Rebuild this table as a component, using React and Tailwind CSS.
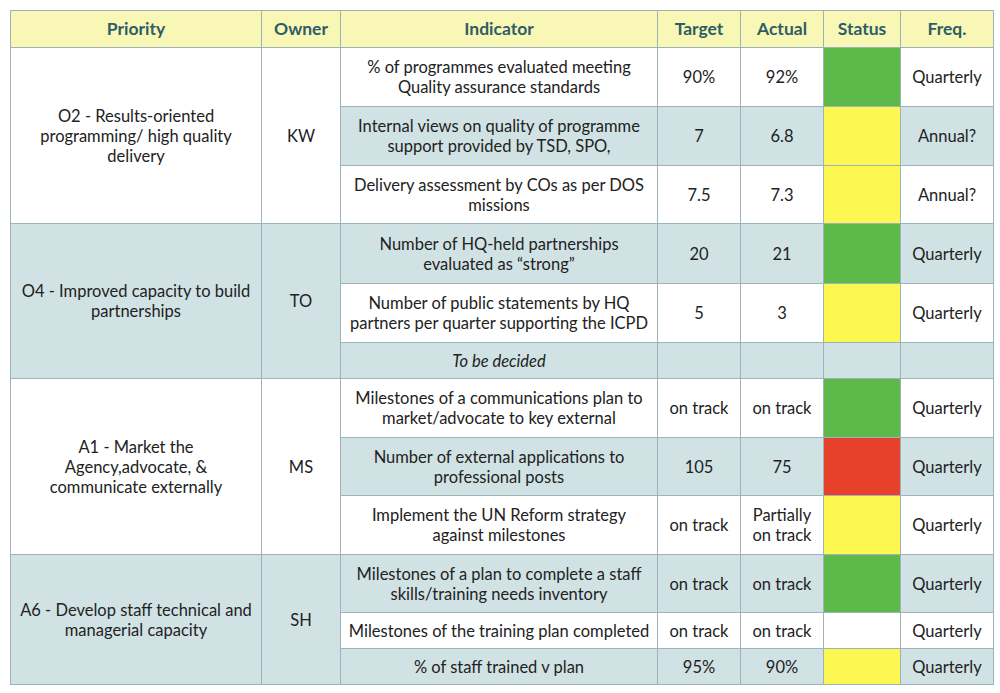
import React from "react";

const G = "bg-[#5cb94a]";
const Y = "bg-[#fdf752]";
const R = "bg-[#e8412b]";

const groups = [
  {
    priority: ["O2 - Results-oriented", "programming/ high quality", "delivery"],
    owner: "KW",
    shade: false,
    rows: [
      { ind: ["% of programmes evaluated meeting", "Quality assurance standards"], t: "90%", a: "92%", s: G, f: "Quarterly", shade: false, h: "h-[59px]" },
      { ind: ["Internal views on quality of programme", "support provided by TSD, SPO,"], t: "7", a: "6.8", s: Y, f: "Annual?", shade: true, h: "h-[59px]" },
      { ind: ["Delivery assessment by COs as per DOS", "missions"], t: "7.5", a: "7.3", s: Y, f: "Annual?", shade: false, h: "h-[58px]" },
    ],
  },
  {
    priority: ["O4 - Improved capacity to build", "partnerships"],
    owner: "TO",
    shade: true,
    rows: [
      { ind: ["Number of HQ-held partnerships", "evaluated as \u201cstrong\u201d"], t: "20", a: "21", s: G, f: "Quarterly", shade: true, h: "h-[60px]" },
      { ind: ["Number of public statements by HQ", "partners per quarter supporting the ICPD"], t: "5", a: "3", s: Y, f: "Quarterly", shade: false, h: "h-[59px]" },
      { ind: ["To be decided"], italic: true, t: "", a: "", s: null, f: "", shade: true, h: "h-[36px]" },
    ],
  },
  {
    priority: ["A1 - Market the", "Agency,advocate, &", "communicate externally"],
    owner: "MS",
    shade: false,
    rows: [
      { ind: ["Milestones of a communications plan to", "market/advocate to key external"], t: "on track", a: "on track", s: G, f: "Quarterly", shade: false, h: "h-[59px]" },
      { ind: ["Number of external applications to", "professional posts"], t: "105", a: "75", s: R, f: "Quarterly", shade: true, h: "h-[58px]" },
      { ind: ["Implement the UN Reform strategy", "against milestones"], t: "on track", a: ["Partially", "on track"], s: Y, f: "Quarterly", shade: false, h: "h-[59px]" },
    ],
  },
  {
    priority: ["A6 - Develop staff technical and", "managerial capacity"],
    owner: "SH",
    shade: true,
    rows: [
      { ind: ["Milestones of a plan to complete a staff", "skills/training needs inventory"], t: "on track", a: "on track", s: G, f: "Quarterly", shade: true, h: "h-[58px]" },
      { ind: ["Milestones of the training plan completed"], t: "on track", a: "on track", s: "bg-white", f: "Quarterly", shade: false, h: "h-[36px]" },
      { ind: ["% of staff trained v plan"], t: "95%", a: "90%", s: Y, f: "Quarterly", shade: true, h: "h-[36px]" },
    ],
  },
];

const B = "border border-[#9db2ba]";
const SH = "bg-[#d1e2e5]";

function Lines({ v }) {
  if (Array.isArray(v)) return v.map((l, i) => <div key={i}>{l}</div>);
  return v;
}

export default function App() {
  return (
    <div className="w-[1000px] h-[693px] bg-white pt-[10px] pl-[10px] font-['Lato','Liberation_Sans',sans-serif] text-[16.5px] leading-[20px] text-[#222]">
      <table className="table-fixed border-collapse w-[983px] border border-[#8a9aa0]">
        <colgroup>
          <col className="w-[251px]" />
          <col className="w-[79px]" />
          <col className="w-[317px]" />
          <col className="w-[83px]" />
          <col className="w-[83px]" />
          <col className="w-[77px]" />
          <col className="w-[93px]" />
        </colgroup>
        <thead>
          <tr className="h-[37px] bg-[#f9f7b6] text-[#2e5d66] font-bold text-[17.5px]">
            {["Priority", "Owner", "Indicator", "Target", "Actual", "Status", "Freq."].map((h) => (
              <th key={h} className={`${B} text-center align-middle font-bold`}>{h}</th>
            ))}
          </tr>
        </thead>
        <tbody>
          {groups.map((g, gi) =>
            g.rows.map((r, ri) => {
              const bg = r.shade ? SH : "bg-white";
              return (
                <tr key={`${gi}-${ri}`} className={r.h}>
                  {ri === 0 && (
                    <>
                      <td rowSpan={g.rows.length} className={`${B} ${g.shade ? SH : "bg-white"} text-center align-middle whitespace-nowrap`}>
                        <Lines v={g.priority} />
                      </td>
                      <td rowSpan={g.rows.length} className={`${B} ${g.shade ? SH : "bg-white"} text-center align-middle`}>
                        {g.owner}
                      </td>
                    </>
                  )}
                  <td className={`${B} ${bg} text-center align-middle ${r.italic ? "italic" : ""} whitespace-nowrap`}>
                    <Lines v={r.ind} />
                  </td>
                  <td className={`${B} ${bg} text-center align-middle whitespace-nowrap`}>{r.t}</td>
                  <td className={`${B} ${bg} text-center align-middle whitespace-nowrap`}><Lines v={r.a} /></td>
                  <td className={`${B} ${r.s ? r.s : bg}`}></td>
                  <td className={`${B} ${bg} text-center align-middle`}>{r.f}</td>
                </tr>
              );
            })
          )}
        </tbody>
      </table>
    </div>
  );
}
